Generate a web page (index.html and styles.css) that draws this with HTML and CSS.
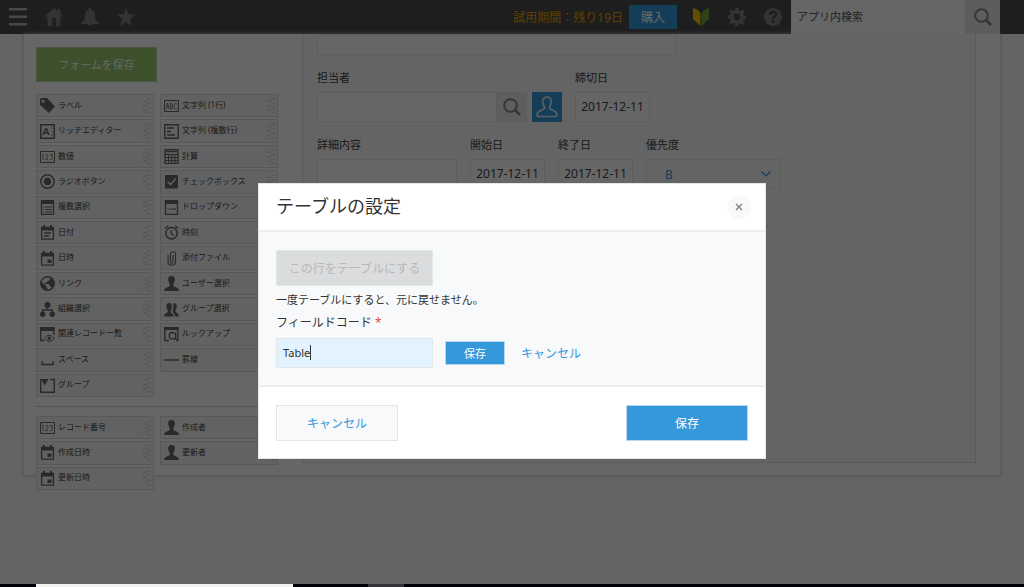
FILE: index.html
```html
<!DOCTYPE html>
<html lang="ja">
<head>
<meta charset="utf-8">
<meta name="viewport" content="width=device-width, initial-scale=1">
<title>テーブルの設定</title>
<link rel="stylesheet" href="styles.css">
</head>
<body>
<svg class="defs" aria-hidden="true">
  <symbol id="menu" viewBox="0 0 18 18"><path d="M0 0h18v2.400H0zM0 7.500h18v2.400H0zM0 15h18v2.400H0z"/></symbol>
  <symbol id="home" viewBox="0 0 18 18"><path d="M9 0 0 8l1 1.200 1.500-1V18h4.500v-8h4v8h4.500V8.200l1.500 1L18 8l-2.500-2.300V1h-3v2z"/></symbol>
  <symbol id="bell" viewBox="0 0 18 18"><path d="M9 0c-1 0-1.500.7-1.500 1.500C4.500 2.500 4 5 4 8c0 3.500-1.500 5.500-4 7v1h7c.3 2 3.700 2 4 0h7v-1c-2.500-1.500-4-3.500-4-7 0-3-.5-5.500-3.500-6.500C10.500.7 10 0 9 0z"/></symbol>
  <symbol id="star" viewBox="0 0 18 18"><path d="m9 0 2.500 6.300 6.500.5-5 4.300L14.700 18 9 14.200 3.300 18 5 11.100 0 6.800l6.500-.5z"/></symbol>
  <symbol id="beginner" viewBox="0 0 16 18"><path fill="#f4c400" d="M0 0c3 .5 6 2.500 7.500 5.500V18L0 11z"/><path fill="#74a843" d="M16 0c-3 .5-6 2.500-7.500 5.500V18L16 11z"/></symbol>
  <symbol id="gear" viewBox="0 0 18 18"><path fill-rule="evenodd" d="m7.500 0h3l.5 2.700 1.400.6L14.600 1.700l2 2-1.500 2.300.6 1.400 2.300.6v3l-2.500.5-.6 1.400 1.500 2.100-2.100 2.100-2.200-1.500-1.400.6-.5 2.300h-3L6.900 15.500l-1.300-.6-2.200 1.500-2-2L2.800 12.200l-.6-1.400L0 10.400v-3l2.300-.5.6-1.300L1.400 3.400l2-2L5.700 3l1.300-.5zM9 5.500a3.500 3.500 0 1 0 0 7 3.500 3.500 0 0 0 0-7z"/></symbol>
  <symbol id="help" viewBox="0 0 18 18"><circle cx="9" cy="9" r="9"/><path d="M6 7c0-4 6-4 6-.5 0 2.200-3 2.200-3 4.500" fill="none" stroke="#4a4a4a" stroke-width="2.200"/><circle cx="9" cy="13.700" r="1.400" fill="#4a4a4a"/></symbol>
  <symbol id="search" viewBox="0 0 18 18"><g fill="none" stroke="currentColor"><circle cx="7.500" cy="7.500" r="6.300" stroke-width="2"/><path d="m12 12 5 5" stroke-width="2.600"/></g></symbol>
  <symbol id="person" viewBox="0 0 22 22"><path d="M11 1C7.500 1 6 4 7 7.500c.4 1.700 1.500 3 1.500 4.200 0 3-7.500 2.300-7.500 7C1 20 2 20.500 3 20.500h16c1 0 2-.5 2-1.800 0-4.700-7.500-4-7.500-7 0-1.200 1.100-2.500 1.500-4.200C16 4 14.500 1 11 1z" fill="none" stroke="currentColor" stroke-width="1.600"/></symbol>
  <symbol id="chevron" viewBox="0 0 10 6"><path d="m.5.5 4.500 4.500L9.500.5" fill="none" stroke="currentColor" stroke-width="1.200"/></symbol>
  <symbol id="cross" viewBox="0 0 8 8"><path d="m1 1 6 6m0-6-6 6" stroke="currentColor" stroke-width="1.500"/></symbol>
  <symbol id="grip" viewBox="0 0 8 16"><path d="m4 2 2-1.500L8 2M0 4l2-1.500L4 4M4 6.500 6 5l2 1.500M0 8.500 2 7l2 1.500M4 11l2-1.500L8 11M0 13l2-1.500L4 13M4 15.500 6 14l2 1.500" fill="none" stroke="currentColor" stroke-width=".8"/></symbol>
  <symbol id="i-tag" viewBox="0 0 15 15"><path fill-rule="evenodd" d="M0 2q0-2 2-2h5l8 8.500L9 15 0 7zM3 1.800A1.500 1.500 0 1 0 3 4.800 1.500 1.500 0 0 0 3 1.800z"/></symbol>
  <symbol id="i-abc" viewBox="0 0 15 15"><path d="M.5 2.500h14v11H.5z" fill="none" stroke="currentColor"/><path d="m2 11 1.500-6L5 11M2.500 9h2M6.300 11V5.500h1.200q1 0 1 1.200T7.500 8h-1.200 1.200q1.200 0 1.200 1.500T7.500 11zM13 6q-3-1.500-3 2.200T13 10.600" fill="none" stroke="currentColor" stroke-width=".8"/></symbol>
  <symbol id="i-rich" viewBox="0 0 15 15"><path d="M.8.8h13.400v13.400H.8z" fill="none" stroke="currentColor" stroke-width="1.500"/><path fill-rule="evenodd" d="M2.300 11 5 4h2l2.700 7H8L7.500 9.500h-3L4 11zM5 8h2L6 5.500z"/><path d="M10 4h3M10.500 7.500H13M11 11h2" stroke="currentColor" stroke-width=".5"/></symbol>
  <symbol id="i-multi" viewBox="0 0 15 15"><path d="M.8.8h13.400v13.400H.8z" fill="none" stroke="currentColor" stroke-width="1.400"/><path d="M3 4h7M3 7.500h4M3 11h8" stroke="currentColor" stroke-width="1.300"/></symbol>
  <symbol id="i-num" viewBox="0 0 15 15"><path d="M.5 2.500h14v11H.5z" fill="none" stroke="currentColor"/><path d="m2 6 1-.7V11M5.500 6q2.500-1.500 2.500.7Q8 8 5.500 10.600H8M9.800 5.500h2.700L11 7.500q2 0 1.800 1.800-.5 2-3 1.200" fill="none" stroke="currentColor" stroke-width=".8"/></symbol>
  <symbol id="i-calc" viewBox="0 0 15 15"><path d="M1 .7h13v13.600H1z" fill="none" stroke="currentColor" stroke-width="1.300"/><path d="M2 2.500h11" stroke="currentColor" stroke-width="1.600"/><path d="M1 5.500h13M1 8.500h13M1 11.500h13M4.500 5v9M7.700 5v9M10.900 5v9" stroke="currentColor"/></symbol>
  <symbol id="i-radio" viewBox="0 0 15 15"><circle cx="7.500" cy="7.500" r="6.700" fill="none" stroke="currentColor" stroke-width="1.400"/><circle cx="7.500" cy="7.500" r="3.700"/></symbol>
  <symbol id="i-check" viewBox="0 0 15 15"><rect x="1" y="1" width="13" height="13.500" rx="1"/><path d="m3.500 7.500 3 3 5.500-6" fill="none" stroke="#eee" stroke-width="1.600"/></symbol>
  <symbol id="i-list" viewBox="0 0 15 15"><path d="M1.500 1h12v13.300h-12z" fill="none" stroke="currentColor" stroke-width="1.300"/><path d="M1 0h13v4H1z"/><path d="M3 7h1.200m1 0H12M3 9.500h1.200m1 0H12M3 12h1.200m1 0H12" stroke="currentColor"/></symbol>
  <symbol id="i-drop" viewBox="0 0 15 15"><path d="M1.500 1h12v13.300h-12z" fill="none" stroke="currentColor" stroke-width="1.300"/><path d="M1 0h13v4H1z"/><path d="M3.500 9H5m1 0h6" stroke="currentColor" stroke-width="1.200"/></symbol>
  <symbol id="i-date" viewBox="0 0 15 15"><path d="M1.600 2.500h11.800v11.700H1.600z" fill="none" stroke="currentColor" stroke-width="1.300"/><path d="M1 2h13v3.500H1zM3 0h2v3H3zM10 0h2v3h-2z"/><path d="M4 8h7M4 11h5" stroke="currentColor" stroke-width="1.400"/></symbol>
  <symbol id="i-datetime" viewBox="0 0 15 15"><path d="M1.600 2.500h11.800v11.700H1.600z" fill="none" stroke="currentColor" stroke-width="1.300"/><path d="M1 2h13v3.500H1zM3 0h2v3H3zM10 0h2v3h-2zM7.500 8.500h4V12h-4z"/></symbol>
  <symbol id="i-clock" viewBox="0 0 15 15"><circle cx="7.500" cy="8.200" r="5.700" fill="none" stroke="currentColor" stroke-width="1.500"/><path d="M7.300 5v3.500l2.200 2M.7 3.500 4 1M14.300 3.500 11 1" fill="none" stroke="currentColor" stroke-width="1.300"/></symbol>
  <symbol id="i-clip" viewBox="0 0 15 15"><path d="M9 4v6.500q0 1.500-1.300 1.500T6.400 10.500V3.500Q6.400.8 9 .8t2.500 2.700v7q0 3.800-3.800 3.800T4 10.500V4" fill="none" stroke="currentColor" stroke-width="1.100"/></symbol>
  <symbol id="i-globe" viewBox="0 0 15 15"><circle cx="7.500" cy="7.500" r="6.800" fill="none" stroke="currentColor" stroke-width="1.300"/><path d="M1 5.500 6.500 10v1.500l1 1V14.500C3 14.500 0 11 1 5.500zM5 1.500h5v1.700L8.500 5 7 5.500v1H5V8h4l1.300 2.500 2 1.500 2-3V5L11 1 7 .7z"/></symbol>
  <symbol id="i-user" viewBox="0 0 15 15"><path d="M7.500 0C4.500 0 3.500 2.500 4.500 5.500 5 7 5.800 8 5.800 9.300 5.800 11.500 0 11 0 15h15c0-4-5.800-3.500-5.800-5.700C9.200 8 10 7 10.500 5.500 11.500 2.500 10.500 0 7.500 0z"/></symbol>
  <symbol id="i-org" viewBox="0 0 15 15"><circle cx="7.500" cy="3" r="3"/><circle cx="2.700" cy="12.300" r="2.700"/><circle cx="12.300" cy="12.300" r="2.700"/><path d="M7.500 5v3M2.700 11V8h9.600v3" fill="none" stroke="currentColor" stroke-width="1.400"/></symbol>
  <symbol id="i-group" viewBox="0 0 15 15"><path d="M5 1C2.500 1 2 3.500 2.700 6c.4 1.500 1 2 1 3.300C3.700 11.500 0 11 0 14.500h9.700c0-3-3-3.200-3-5.200C6.700 8 7.500 7.500 7.800 6 8.500 3 7.500 1 5 1zM9 1.500c3-1 4.300 1 3.700 4-.3 1.500-1.200 2.200-1.200 3.500 0 2 3.500 2.200 3.500 5.500h-4c0-2.500-2-3.500-2.500-4.500C8.500 8 10 6 9 1.500z"/></symbol>
  <symbol id="i-related" viewBox="0 0 15 15"><path d="M4 13.500H.8V1h13v7" fill="none" stroke="currentColor" stroke-width="1.400"/><path d="M0 0h14.500v4H0z"/><path d="M4 11.500q5-6.500 10.500 0-5.500 5.500-10.500 0z" fill="none" stroke="currentColor"/><circle cx="9.200" cy="11.300" r="1.700"/></symbol>
  <symbol id="i-lookup" viewBox="0 0 15 15"><path d="M5 13.500H.8V1h13v12" fill="none" stroke="currentColor" stroke-width="1.400"/><path d="M0 0h14.500v3H0z"/><circle cx="8.500" cy="8.800" r="3.300" fill="none" stroke="currentColor" stroke-width="1.300"/><path d="m11 11.200 3 3" stroke="currentColor" stroke-width="1.500"/></symbol>
  <symbol id="i-space" viewBox="0 0 15 15"><path d="M2 9v3.500h11V9" fill="none" stroke="currentColor" stroke-width="1.400"/></symbol>
  <symbol id="i-rule" viewBox="0 0 15 15"><path d="M0 8h15" stroke="currentColor" stroke-width="1.400"/></symbol>
  <symbol id="i-box" viewBox="0 0 15 15"><path d="M.7 1v13.300h13.600V1.500H10" fill="none" stroke="currentColor" stroke-width="1.400"/><path d="M1 1h7.500L4.700 7.500z"/></symbol>
</svg>

<div class="page">
  <header class="topbar">
    <nav class="topbar-nav">
      <button class="icon-button light" aria-label="メニュー"><svg><use href="#menu"/></svg></button>
      <button class="icon-button" aria-label="ホーム"><svg><use href="#home"/></svg></button>
      <button class="icon-button" aria-label="通知"><svg><use href="#bell"/></svg></button>
      <button class="icon-button" aria-label="お気に入り"><svg><use href="#star"/></svg></button>
    </nav>
    <div class="trial"><span>試用期間：残り19日</span><button class="buy">購入</button></div>
    <div class="tools">
      <button class="icon-button" aria-label="はじめての方へ"><svg><use href="#beginner"/></svg></button>
      <button class="icon-button" aria-label="設定"><svg><use href="#gear"/></svg></button>
      <button class="icon-button" aria-label="ヘルプ"><svg><use href="#help"/></svg></button>
    </div>
    <form class="search">
      <input type="text" aria-label="アプリ内検索" placeholder="アプリ内検索">
      <button type="button" aria-label="検索"><svg><use href="#search"/></svg></button>
    </form>
  </header>

  <main class="sheet">
    <aside class="palette">
      <button class="save-form">フォームを保存</button>
      <ul class="parts">
        <li><svg><use href="#i-tag"/></svg><span>ラベル</span><svg class="grip"><use href="#grip"/></svg></li>
        <li><svg><use href="#i-abc"/></svg><span>文字列 (1行)</span><svg class="grip"><use href="#grip"/></svg></li>
        <li><svg><use href="#i-rich"/></svg><span>リッチエディター</span><svg class="grip"><use href="#grip"/></svg></li>
        <li><svg><use href="#i-multi"/></svg><span>文字列 (複数行)</span><svg class="grip"><use href="#grip"/></svg></li>
        <li><svg><use href="#i-num"/></svg><span>数値</span><svg class="grip"><use href="#grip"/></svg></li>
        <li><svg><use href="#i-calc"/></svg><span>計算</span><svg class="grip"><use href="#grip"/></svg></li>
        <li><svg><use href="#i-radio"/></svg><span>ラジオボタン</span><svg class="grip"><use href="#grip"/></svg></li>
        <li><svg><use href="#i-check"/></svg><span>チェックボックス</span><svg class="grip"><use href="#grip"/></svg></li>
        <li><svg><use href="#i-list"/></svg><span>複数選択</span><svg class="grip"><use href="#grip"/></svg></li>
        <li><svg><use href="#i-drop"/></svg><span>ドロップダウン</span><svg class="grip"><use href="#grip"/></svg></li>
        <li><svg><use href="#i-date"/></svg><span>日付</span><svg class="grip"><use href="#grip"/></svg></li>
        <li><svg><use href="#i-clock"/></svg><span>時刻</span><svg class="grip"><use href="#grip"/></svg></li>
        <li><svg><use href="#i-datetime"/></svg><span>日時</span><svg class="grip"><use href="#grip"/></svg></li>
        <li><svg><use href="#i-clip"/></svg><span>添付ファイル</span><svg class="grip"><use href="#grip"/></svg></li>
        <li><svg><use href="#i-globe"/></svg><span>リンク</span><svg class="grip"><use href="#grip"/></svg></li>
        <li><svg><use href="#i-user"/></svg><span>ユーザー選択</span><svg class="grip"><use href="#grip"/></svg></li>
        <li><svg><use href="#i-org"/></svg><span>組織選択</span><svg class="grip"><use href="#grip"/></svg></li>
        <li><svg><use href="#i-group"/></svg><span>グループ選択</span><svg class="grip"><use href="#grip"/></svg></li>
        <li><svg><use href="#i-related"/></svg><span>関連レコード一覧</span><svg class="grip"><use href="#grip"/></svg></li>
        <li><svg><use href="#i-lookup"/></svg><span>ルックアップ</span><svg class="grip"><use href="#grip"/></svg></li>
        <li><svg><use href="#i-space"/></svg><span>スペース</span><svg class="grip"><use href="#grip"/></svg></li>
        <li><svg><use href="#i-rule"/></svg><span>罫線</span><svg class="grip"><use href="#grip"/></svg></li>
        <li><svg><use href="#i-box"/></svg><span>グループ</span><svg class="grip"><use href="#grip"/></svg></li>
      </ul>
      <ul class="parts system">
        <li><svg><use href="#i-num"/></svg><span>レコード番号</span><svg class="grip"><use href="#grip"/></svg></li>
        <li><svg><use href="#i-user"/></svg><span>作成者</span><svg class="grip"><use href="#grip"/></svg></li>
        <li><svg><use href="#i-datetime"/></svg><span>作成日時</span><svg class="grip"><use href="#grip"/></svg></li>
        <li><svg><use href="#i-user"/></svg><span>更新者</span><svg class="grip"><use href="#grip"/></svg></li>
        <li><svg><use href="#i-datetime"/></svg><span>更新日時</span><svg class="grip"><use href="#grip"/></svg></li>
      </ul>
    </aside>

    <section class="canvas" aria-label="フォーム">
      <div class="open-field"></div>
      <div class="fields">
        <div class="field">
          <label for="assignee">担当者</label>
          <div class="picker">
            <input id="assignee" type="text"><button class="lookup" aria-label="検索"><svg><use href="#search"/></svg></button>
            <button class="choose" aria-label="ユーザーを選択"><svg><use href="#person"/></svg></button>
          </div>
        </div>
        <div class="field"><label for="due">締切日</label><input id="due" class="date" type="text" value="2017-12-11"></div>
      </div>
      <div class="fields">
        <div class="field"><label for="detail">詳細内容</label><input id="detail" class="detail" type="text"></div>
        <div class="field"><label for="start">開始日</label><input id="start" class="date" type="text" value="2017-12-11"></div>
        <div class="field"><label for="end">終了日</label><input id="end" class="date" type="text" value="2017-12-11"></div>
        <div class="field">
          <label for="priority">優先度</label>
          <div class="select"><select id="priority"><option>B</option></select><svg><use href="#chevron"/></svg></div>
        </div>
      </div>
    </section>
  </main>

  <div class="overlay">
    <div class="dialog" role="dialog" aria-labelledby="dialog-title">
      <div class="dialog-head">
        <h1 id="dialog-title">テーブルの設定</h1>
        <button class="close" aria-label="閉じる"><svg><use href="#cross"/></svg></button>
      </div>
      <div class="dialog-body">
        <button class="make-table" disabled>この行をテーブルにする</button>
        <p class="note">一度テーブルにすると、元に戻せません。</p>
        <label class="code-label" for="code">フィールドコード <span class="required">*</span></label>
        <div class="code-row">
          <div class="code-box"><input id="code" type="text" value="Table" size="3"><i class="caret"></i></div>
          <button class="primary small">保存</button>
          <button class="text-button">キャンセル</button>
        </div>
      </div>
      <div class="dialog-foot">
        <button class="secondary">キャンセル</button>
        <button class="primary">保存</button>
      </div>
    </div>
  </div>
</div>
<footer class="taskbar"><span class="task active"></span><span class="task"></span></footer>
</body>
</html>
```

FILE: styles.css
```css
* { box-sizing: border-box; }

body {
  margin: 0;
  min-height: 100vh;
  display: flex;
  flex-direction: column;
  font-family: "Noto Sans", "Noto Sans CJK JP", sans-serif;
  font-size: 11px;
  color: #444;
  background: #f7fbf8;
}

button, input, select { font: inherit; color: inherit; border-radius: 0; }
button { padding: 0; border: 0; background: none; }
input { min-width: 0; outline: 0; }
svg { display: block; fill: currentColor; }
ul, h1, p { margin: 0; padding: 0; }
ul { list-style: none; }

.defs { position: absolute; width: 0; height: 0; }
.page { position: relative; flex: 1; }

/* Top bar */
.topbar {
  display: flex;
  align-items: center;
  height: 34px;
  padding: 0 24px 0 9px;
  background: #4b4b4b;
}
.topbar-nav { display: flex; gap: 18px; margin-right: auto; }
.icon-button { color: #808080; }
.icon-button.light { color: #b4b4b4; }
.icon-button svg { width: 18px; height: 18px; }
.trial { display: flex; align-items: center; gap: 6px; font-size: 12px; color: #e5a000; }
.buy { width: 48px; height: 24px; padding-bottom: 1px; color: #fff; background: #3498db; }
.tools { display: flex; gap: 18px; margin: 0 9px 0 15px; }
.search { display: flex; align-self: stretch; width: 209px; }
.search input { flex: 1; padding: 0 6px 2px; border: 0; background: #fff; }
.search input::placeholder { color: #555; opacity: 1; }
.search button { width: 35px; display: grid; place-items: center; color: #888; background: #e8e8e8; }
.search button svg { width: 18px; height: 18px; }

/* Form editor */
.sheet {
  display: flex;
  gap: 24px;
  margin: 0 24px;
  padding: 0 24px 12px 12px;
  background: #fff;
  box-shadow: 0 0 4px #b4bab6;
}
.palette { width: 242px; padding-top: 13px; margin-bottom: -27px; }
.save-form { width: 121px; height: 35px; padding-bottom: 2px; color: #fff; background: #94c96b; border: 1px solid #b9d8a2; }
.parts {
  display: grid;
  grid-template-columns: 1fr 1fr;
  grid-auto-rows: 1fr;
  gap: 2px 6px;
  height: 303px;
  margin-top: 12px;
}
.parts.system { height: 74px; margin-top: 19px; position: relative; }
.parts.system::before {
  content: "";
  position: absolute;
  inset: -10px 0 auto;
  border-top: 1px solid #d2d2d2;
}
.parts li {
  display: flex;
  align-items: center;
  gap: 3px;
  padding: 0 2px 0 3px;
  font-size: 8px;
  line-height: 12px;
  background: #f4f4f4;
  border: 1px solid #dcdcdc;
}
.parts span { padding-bottom: 2px; }
.parts svg { width: 15px; height: 15px; color: #666; }
.parts .grip { width: 8px; height: 16px; margin-left: auto; color: #c4c4c4; }

.canvas {
  flex: 1;
  display: flex;
  flex-direction: column;
  gap: 15px;
  padding: 0 14px;
  background: #f7fbf8;
  border: solid #dce2de;
  border-width: 0 1px 1px;
}
.open-field { width: 359px; height: 21px; background: #fff; border: 1px solid #e6eae7; }
.fields { display: flex; gap: 13px; }
.field { display: flex; flex-direction: column; gap: 7px; line-height: 15px; }
.field input { height: 30px; background: #fff; border: 1px solid #e6eae7; }
.picker { display: flex; }
.picker input { width: 180px; }
.lookup, .choose { width: 30px; height: 30px; display: grid; place-items: center; }
.lookup { color: #888; background: #ececec; }
.lookup svg { width: 18px; height: 18px; }
.choose { margin-left: 5px; color: #e4f1fa; background: #3498db; }
.choose svg { width: 22px; height: 22px; }
.field .date { width: 75px; padding: 0 0 2px; text-align: center; font-size: 12px; }
.field .detail { width: 140px; }
.select { position: relative; width: 135px; }
.select select {
  appearance: none;
  width: 100%;
  height: 30px;
  padding: 0 18px;
  font-size: 12px;
  color: #3498db;
  background: #f7fbf8;
  border: 1px solid #e6eae7;
}
.select svg { position: absolute; right: 10px; top: 12px; width: 10px; height: 6px; color: #3498db; pointer-events: none; }

/* Dialog */
.overlay {
  position: absolute;
  inset: 0;
  display: flex;
  justify-content: center;
  align-items: flex-start;
  padding-top: 183px;
  color: #333;
  background: rgba(0, 0, 0, .6);
}
.dialog { width: 508px; background: #fff; border: 1px solid #e3e7e8; }
.dialog-head { display: flex; justify-content: space-between; align-items: center; height: 46px; padding: 0 14px 0 17px; }
h1 { padding-bottom: 2px; font-size: 18px; font-weight: 400; line-height: 24px; }
.close { width: 24px; height: 24px; display: grid; place-items: center; border-radius: 50%; color: #888; background: #f7f9fa; }
.close svg { width: 8px; height: 8px; }
.dialog-body { padding: 18px 17px 17px; background: #f7f9fa; border: solid #eceff0; border-width: 2px 0; }
.make-table { width: 157px; height: 36px; font-size: 12px; color: #b8b8b8; background: #dadcdd; border: 1px solid #e3e7e8; }
.note { margin-top: 4px; line-height: 20px; }
.code-label { display: block; margin-top: 4px; font-size: 12px; line-height: 18px; }
.required { color: #e74c3c; }
.code-row { display: flex; align-items: center; margin-top: 6px; gap: 12px; }
.code-box { display: flex; align-items: center; width: 157px; height: 30px; padding: 0 0 2px 6px; background: #e2f2fe; border: 1px solid #e3e7e8; }
.code-box input { width: 27px; padding: 0; border: 0; background: none; }
.caret { width: 1px; height: 15px; background: #333; }
.primary { width: 122px; height: 36px; font-size: 12px; color: #fff; background: #3498db; border: 1px solid #b8d9f0; }
.primary.small { width: 60px; height: 24px; font-size: 11px; }
.text-button { margin-left: 4px; font-size: 12px; color: #3498db; }
.dialog-foot { display: flex; justify-content: space-between; padding: 18px 17px 17px; }
.secondary { width: 122px; height: 36px; font-size: 12px; color: #3498db; background: #f7f9fa; border: 1px solid #e3e7e8; }

/* Desktop taskbar edge */
.taskbar { display: flex; gap: 75px; height: 3px; padding-left: 36px; background: #000008; }
.task { width: 36px; background: #333338; }
.task.active { width: 257px; background: #f2f2f2; }
```
